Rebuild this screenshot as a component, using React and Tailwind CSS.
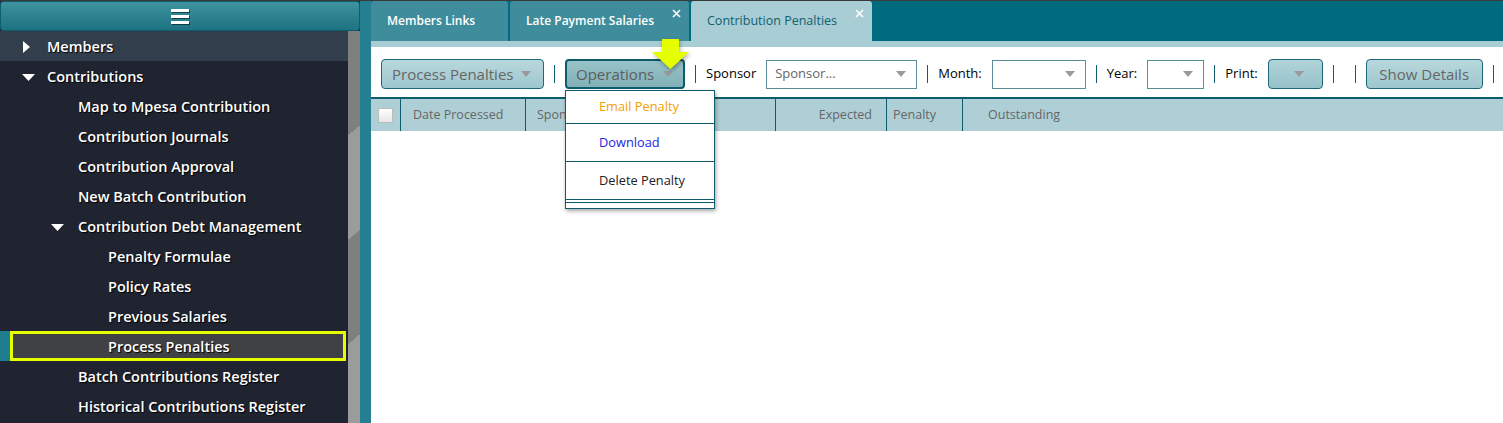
import React from "react";

const font = { fontFamily: '"Open Sans", "Liberation Sans", sans-serif' };

function Caret({ className = "" }) {
  return (
    <svg width="10" height="6" viewBox="0 0 10 6" className={className}>
      <path d="M0 0 L10 0 L5 6 Z" fill="#9a9a9a" />
    </svg>
  );
}

function CloseX() {
  return (
    <svg width="9" height="9" viewBox="0 0 9 9" className="absolute right-[8px] top-[8px]">
      <path d="M1 1 L8 8 M8 1 L1 8" stroke="#ffffff" strokeWidth="1.6" />
    </svg>
  );
}

function Sep() {
  return <span className="h-[18px] w-px bg-[#0e5d6d]" />;
}

function Select({ w, placeholder }) {
  return (
    <div
      className={`flex h-[29px] items-center justify-between border border-[#5b8e98] bg-white pl-[8px] pr-[10px] text-[13px] text-[#666] ${w}`}
    >
      <span>{placeholder}</span>
      <Caret />
    </div>
  );
}

const menu = [
  { label: "Members", level: 0, arrow: "right", bg: "bg-[#333e4c]" },
  { label: "Contributions", level: 0, arrow: "down" },
  { label: "Map to Mpesa Contribution", level: 1 },
  { label: "Contribution Journals", level: 1 },
  { label: "Contribution Approval", level: 1 },
  { label: "New Batch Contribution", level: 1 },
  { label: "Contribution Debt Management", level: 1, arrow: "down" },
  { label: "Penalty Formulae", level: 2 },
  { label: "Policy Rates", level: 2 },
  { label: "Previous Salaries", level: 2 },
  { label: "Process Penalties", level: 2, active: true },
  { label: "Batch Contributions Register", level: 1 },
  { label: "Historical Contributions Register", level: 1 },
];

const indent = ["pl-[47px]", "pl-[78px]", "pl-[108px]"];
const arrowPos = ["left-[22px]", "left-[51px]", "left-[81px]"];

function MenuRow({ item }) {
  const arrow =
    item.arrow === "right" ? (
      <svg width="8" height="12" viewBox="0 0 8 12" className={`absolute top-[10px] ${arrowPos[item.level]}`}>
        <path d="M1 0 L8 6 L1 12 Z" fill="#fff" />
      </svg>
    ) : item.arrow === "down" ? (
      <svg width="13" height="7" viewBox="0 0 13 7" className={`absolute top-[13px] ${arrowPos[item.level]}`}>
        <path d="M0 0 L13 0 L6.5 7 Z" fill="#fff" />
      </svg>
    ) : null;

  if (item.active) {
    return (
      <div className="flex h-[30px]">
        <div className="w-[10px] bg-[#1e7d8f]" />
        <div className="mr-[2px] flex flex-1 items-center border-[3px] border-[#e5ff00] bg-[#404145] pl-[95px] pt-[2px]">
          <span className="text-[14.5px] font-semibold text-white [text-shadow:1px_1px_1px_#000]">
            {item.label}
          </span>
        </div>
      </div>
    );
  }

  return (
    <div className={`relative flex h-[30px] items-center pt-[2px] ${indent[item.level]} ${item.bg || ""}`}>
      {arrow}
      <span className="text-[14.5px] font-semibold text-white [text-shadow:1px_1px_1px_#000]">
        {item.label}
      </span>
    </div>
  );
}

function Sidebar() {
  return (
    <aside className="flex w-[360px] flex-col bg-[#1f2430]">
      <div className="flex h-[30px] items-center justify-center rounded-[3px] border border-[#0e5d6c] bg-linear-to-b from-[#3d939f] to-[#1d7383]">
        <div className="flex flex-col gap-[3px] drop-shadow-[1px_1px_0_rgba(0,0,0,0.5)]">
          <span className="h-[3px] w-[18px] bg-white" />
          <span className="h-[3px] w-[18px] bg-white" />
          <span className="h-[3px] w-[18px] bg-white" />
        </div>
      </div>
      <div className="flex flex-1">
        <nav className="flex-1">
          {menu.map((m) => (
            <MenuRow key={m.label} item={m} />
          ))}
        </nav>
        <div className="w-[12px] bg-[repeating-linear-gradient(140deg,#7f7f7f_0px,#7f7f7f_80px,#9b9b9b_80px,#9b9b9b_160px)]" />
      </div>
    </aside>
  );
}

function Tabs() {
  return (
    <div className="flex h-[40px] gap-[2px] bg-[#006a7e]">
      <div className="flex w-[137px] items-center rounded-t-[3px] bg-[#3f8d9c] pl-[16px] text-[12px] font-semibold text-white">
        Members Links
      </div>
      <div className="relative flex w-[179px] items-center rounded-t-[3px] bg-[#3f8d9c] pl-[16px] text-[12px] font-semibold text-white">
        Late Payment Salaries
        <CloseX />
      </div>
      <div className="relative flex w-[181px] items-center rounded-t-[3px] bg-[#a9cdd4] pl-[16px] text-[12.5px] text-[#12606f]">
        Contribution Penalties
        <CloseX />
      </div>
    </div>
  );
}

function Toolbar() {
  return (
    <div className="flex h-[50px] items-start bg-white pl-[10px] pt-[12px] text-[13px] text-black">
      <div className="flex h-[30px] items-center gap-[10px] whitespace-nowrap">
        <button className="flex h-[30px] w-[163px] items-center justify-between rounded-[4px] border border-[#1c6a7a] bg-linear-to-b from-[#b8d8dd] to-[#9ec7ce] pl-[10px] pr-[12px] text-[15px] text-[#666]">
          Process Penalties
          <Caret />
        </button>
        <Sep />
        <div className="relative">
          <button className="flex h-[30px] w-[120px] items-center justify-between rounded-[4px] border-2 border-[#0e5b6b] bg-linear-to-b from-[#97c2c8] to-[#82b1b8] pl-[9px] pr-[10px] text-[15px] text-[#5e5e5e]">
            Operations
            <Caret />
          </button>
          <div className="absolute left-0 top-[31px] z-10 w-[150px] border border-[#0e5b6b] bg-white text-[12.8px] shadow-[1px_2px_4px_rgba(0,0,0,0.35)]">
            <div className="flex h-[33px] items-center border-b border-[#0e5b6b] pl-[33px] text-[#f5a000]">
              Email Penalty
            </div>
            <div className="flex h-[38px] items-center border-b border-[#0e5b6b] pl-[33px] text-[#2424e0]">
              Download
            </div>
            <div className="flex h-[38px] items-center border-b border-[#0e5b6b] pl-[33px] text-[#222]">
              Delete Penalty
            </div>
            <div className="h-[3px] border-b border-[#0e5b6b]" />
            <div className="h-[5px]" />
          </div>
        </div>
        <Sep />
        <span>Sponsor</span>
        <Select w="w-[151px]" placeholder="Sponsor..." />
        <Sep />
        <span>Month:</span>
        <Select w="w-[94px]" placeholder="" />
        <Sep />
        <span>Year:</span>
        <Select w="w-[57px]" placeholder="" />
        <Sep />
        <span>Print:</span>
        <div className="flex h-[30px] w-[55px] items-center justify-end rounded-[4px] border border-[#1c6a7a] bg-linear-to-b from-[#b0d3d9] to-[#97c2c9] pr-[18px]">
          <Caret />
        </div>
        <Sep />
        <span className="w-px" />
        <Sep />
        <button className="flex h-[30px] w-[117px] items-center justify-center rounded-[4px] border border-[#1c6a7a] bg-linear-to-b from-[#b8d8dd] to-[#9ec7ce] text-[15px] text-[#666]">
          Show Details
        </button>
        <Sep />
      </div>
    </div>
  );
}

function TableHeader() {
  return (
    <div className="flex h-[34px] border-t-2 border-[#0e5d6d] bg-[#aecfd6] text-[12.5px] text-[#666]">
      <div className="flex w-[30px] items-center justify-center border-r border-[#0e5d6d]">
        <span className="h-[15px] w-[15px] rounded-[2px] border border-[#bbb] bg-linear-to-b from-white to-[#e6e6e6]" />
      </div>
      <div className="flex w-[125px] items-center border-r border-[#0e5d6d] pl-[12px]">Date Processed</div>
      <div className="flex w-[250px] items-center border-r border-[#0e5d6d] pl-[11px]">Sponsor</div>
      <div className="flex w-[111px] items-center justify-end border-r border-[#0e5d6d] pr-[14px]">Expected</div>
      <div className="flex w-[76px] items-center border-r border-[#0e5d6d] pl-[6px]">Penalty</div>
      <div className="flex w-[120px] items-center pl-[25px]">Outstanding</div>
    </div>
  );
}

export default function App() {
  return (
    <div className="relative flex h-[423px] w-[1503px] overflow-hidden border-t border-[#3a3a3a]" style={font}>
      <Sidebar />
      <div className="w-[11px] bg-[#247f91]" />
      <main className="flex flex-1 flex-col bg-white">
        <Tabs />
        <div className="h-[6px] bg-[#a9cdd5]" />
        <Toolbar />
        <TableHeader />
        <div className="flex-1 bg-white" />
      </main>
      <svg width="40" height="32" viewBox="0 0 40 32" className="absolute left-[651px] top-[38px] drop-shadow-[1px_2px_2px_rgba(0,0,0,0.35)]">
        <path d="M11 0 H28 V13 H38 L19.5 30 L1 13 H11 Z" fill="#e5ff00" />
      </svg>
    </div>
  );
}
